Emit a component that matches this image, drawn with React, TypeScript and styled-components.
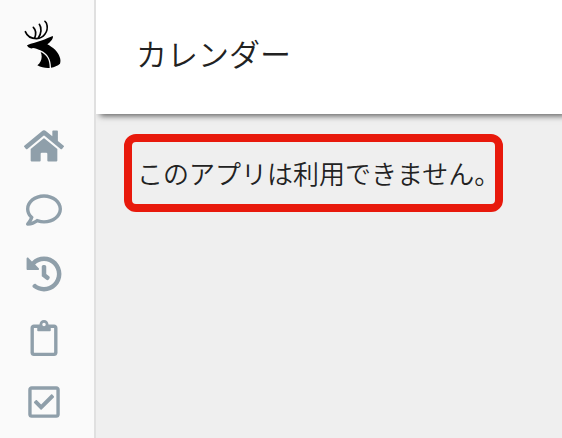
import React from "react";
import styled, { createGlobalStyle } from "styled-components";
import {
  FaHistory,
  FaHome,
  FaRegCheckSquare,
  FaRegClipboard,
  FaRegComment,
} from "react-icons/fa";

const GlobalStyle = createGlobalStyle`
  * {
    box-sizing: border-box;
  }

  body {
    margin: 0;
    background: #efefef;
    color: #222;
    font-family: "Noto Sans CJK JP", sans-serif;
  }
`;

const Layout = styled.div`
  display: flex;
  min-height: 100vh;
`;

const Sidebar = styled.aside`
  flex: none;
  width: 96px;
  padding-right: 6px;
  background: #fafafa;
  border-right: 2px solid #e0e0e0;
`;

const LogoLink = styled.a`
  display: flex;
  justify-content: center;
  height: 114px;
  padding: 19px 4px 0 0;
  color: #000;
`;

const NavLink = styled.a<{ $size: number }>`
  display: flex;
  align-items: center;
  justify-content: center;
  height: 64px;
  color: #8f9faa;
  font-size: ${({ $size }) => $size}px;
`;

const Content = styled.div`
  flex: 1;
  min-width: 0;
`;

const Header = styled.header`
  display: flex;
  align-items: center;
  height: 114px;
  padding: 0 40px 8px;
  background: #fff;
  box-shadow: 4px 2px 6px rgba(0, 0, 0, 0.6);
  clip-path: inset(0 0 -16px 0);
`;

const Title = styled.h1`
  margin: 0;
  font-size: 31px;
  font-weight: 350;
  line-height: 48px;
`;

const Main = styled.main`
  padding: 20px 28px;
`;

const Notice = styled.p`
  width: fit-content;
  margin: 0;
  padding: 12px 0 12px 5px;
  border: 8px solid #e8190c;
  border-radius: 12px;
  font-size: 26px;
  font-weight: 350;
  line-height: 38px;
  white-space: nowrap;
`;

/* The closing full stop leaves half an em of blank space, so the frame is drawn closer. */
const NoticeText = styled.span`
  display: block;
  margin-right: -5px;
`;

const navItems = [
  { label: "ホーム", Icon: FaHome, size: 40 },
  { label: "コメント", Icon: FaRegComment, size: 36 },
  { label: "履歴", Icon: FaHistory, size: 36 },
  { label: "クリップボード", Icon: FaRegClipboard, size: 36 },
  { label: "タスク", Icon: FaRegCheckSquare, size: 36 },
];

function DeerLogo() {
  return (
    <svg width="39" height="51" viewBox="69 57 117 153" aria-hidden="true">
      <g fill="none" stroke="currentColor" strokeWidth="5" strokeLinecap="round">
        <path d="M76 95C81 108 93 116 110 116C130 115 145 96 141 75C140 69 138 66 135 64" />
        <path d="M100 82C107 89 109 101 104 114" />
        <path d="M118 73C126 84 124 101 115 114" />
      </g>
      <path
        fill="currentColor"
        d="M81 136C96 130 111 126 127 121C138 117 149 111 158 108C161 112 156 121 148 128L142 133C160 143 174 155 179 171C182 178 182 185 180 191C173 197 163 201 153 203C153 179 144 161 121 151C112 147 106 145 99 144C93 147 84 144 81 136Z"
      />
      <path
        fill="currentColor"
        d="M122 156C140 164 149 178 149 204C136 205 123 202 112 196C120 190 125 180 125 170C125 165 124 160 122 156Z"
      />
    </svg>
  );
}

export default function App() {
  return (
    <>
      <GlobalStyle />
      <Layout>
        <Sidebar>
          <LogoLink href="#top" aria-label="トップ">
            <DeerLogo />
          </LogoLink>
          <nav>
            {navItems.map(({ label, Icon, size }) => (
              <NavLink key={label} href="#" aria-label={label} $size={size}>
                <Icon />
              </NavLink>
            ))}
          </nav>
        </Sidebar>
        <Content>
          <Header>
            <Title>カレンダー</Title>
          </Header>
          <Main>
            <Notice>
              <NoticeText>このアプリは利用できません。</NoticeText>
            </Notice>
          </Main>
        </Content>
      </Layout>
    </>
  );
}
